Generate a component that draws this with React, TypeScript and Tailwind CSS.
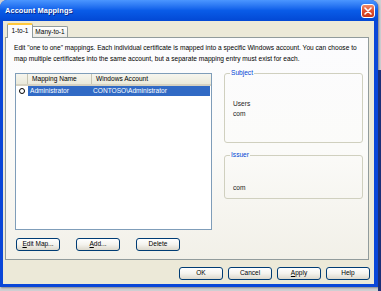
import React from "react";

const font = { fontFamily: '"Liberation Sans", Arial, sans-serif' };

function XpButton({ children, className = "" }: { children: React.ReactNode; className?: string }) {
  return (
    <div
      className={
        "h-[13px] w-[44px] flex items-center justify-center rounded-[3px] border border-[#003C74] bg-gradient-to-b from-[#ffffff] via-[#f4f3ee] to-[#dcd8cc] text-[6.5px] leading-none text-black " +
        className
      }
    >
      {children}
    </div>
  );
}

export default function App() {
  return (
    <div className="w-[381px] h-[291px] bg-[#cfcfd2] overflow-hidden flex" style={font}>
      <div className="w-[378px] h-[287px] flex flex-col rounded-t-[7px] bg-[#0a46d8] shadow-[1px_1px_2px_rgba(0,0,0,0.35)]">
        {/* Title bar */}
        <div className="h-[21px] flex items-center pl-[5px] pr-[3px] rounded-t-[7px] bg-gradient-to-b from-[#4b96ff] via-[#0a5ce8] to-[#0348d4]">
          <span className="text-white font-bold text-[7.4px] leading-none tracking-[0.1px] [text-shadow:1px_1px_0_#0a2a8a]">
            Account Mappings
          </span>
          <div className="flex-1" />
          <div className="w-[14px] h-[14px] rounded-[3px] border border-white bg-gradient-to-b from-[#f08a6a] via-[#e0502e] to-[#c8391c] flex items-center justify-center">
            <svg width="8" height="8" viewBox="0 0 8 8">
              <path d="M1 1 L7 7 M7 1 L1 7" stroke="white" strokeWidth="1.6" strokeLinecap="round" />
            </svg>
          </div>
        </div>

        {/* Body */}
        <div className="flex-1 ml-[3px] mr-[4px] mb-[3px] bg-[#ECE9D8] flex flex-col">
          {/* Tabs */}
          <div className="flex items-end pt-[2px] pl-[4px] h-[16px]">
            <div className="relative z-10 w-[26px] h-[15px] -mb-[1px] bg-[#fcfcfe] border-x border-[#919B9C] border-t-[2px] border-t-[#FFC83C] rounded-t-[2px] flex items-center justify-center text-[6.5px] leading-none text-black">
              1-to-1
            </div>
            <div className="w-[35px] h-[11px] bg-gradient-to-b from-[#ffffff] to-[#ecebe6] border-t border-r border-[#919B9C] rounded-tr-[2px] flex items-center justify-center text-[6.5px] leading-none text-black">
              Many-to-1
            </div>
          </div>

          {/* Panel */}
          <div className="ml-[2px] w-[364px] h-[223px] border border-[#919B9C] bg-gradient-to-b from-[#fcfcfe] via-[#fbfbf9] to-[#f2f0e8] flex flex-col">
            <div className="pt-[4px] pl-[8px] text-[6.6px] leading-[11px] text-black">
              <div className="whitespace-nowrap">
                Edit "one to one" mappings. Each individual certificate is mapped into a specific Windows account. You can choose to
              </div>
              <div className="whitespace-nowrap">
                map multiple certificates into the same account, but a separate mapping entry must exist for each.
              </div>
            </div>

            <div className="flex mt-[9px] pl-[9px]">
              {/* List */}
              <div className="w-[197px] h-[157px] border border-[#7F9DB9] bg-white flex flex-col">
                <div className="h-[12px] flex border-b-[2px] border-[#d6d2c2] bg-gradient-to-b from-[#f6f5ee] to-[#ebeadb] text-[6.6px] leading-none text-black">
                  <div className="w-[12px] border-r border-[#c7c5b2]" />
                  <div className="w-[64px] border-r border-[#c7c5b2] flex items-center pl-[4px]">Mapping Name</div>
                  <div className="flex-1 flex items-center pl-[4px]">Windows Account</div>
                </div>
                <div className="h-[10px] flex items-center text-[6.6px] leading-none">
                  <div className="w-[12px] flex items-center justify-center">
                    <div className="w-[6px] h-[6px] rounded-full border-[1.5px] border-black bg-white" />
                  </div>
                  <div className="w-[182px] h-[10px] bg-[#316AC5] text-white flex items-center">
                    <div className="w-[65px] pl-[2px]">Administrator</div>
                    <div>CONTOSO\Administrator</div>
                  </div>
                </div>
              </div>

              {/* Right column */}
              <div className="ml-[12px] w-[139px] -mt-[4px] flex flex-col">
                <fieldset className="h-[74px] border border-[#d0d0bf] rounded-[3px]">
                  <legend className="ml-[5px] px-[1px] text-[6.6px] leading-[8px] text-[#0046D5]">Subject</legend>
                  <div className="pl-[8px] pt-[22px] text-[6.6px] leading-[10px] text-[#222]">
                    <div>Users</div>
                    <div>com</div>
                  </div>
                </fieldset>
                <fieldset className="mt-[8px] h-[48px] border border-[#d0d0bf] rounded-[3px]">
                  <legend className="ml-[5px] px-[1px] text-[6.6px] leading-[8px] text-[#0046D5]">Issuer</legend>
                  <div className="pl-[8px] pt-[24px] text-[6.6px] leading-[10px] text-[#222]">
                    <div>com</div>
                  </div>
                </fieldset>
              </div>
            </div>

            {/* Panel buttons */}
            <div className="flex mt-[8px] pl-[10px] gap-[16px]">
              <XpButton>
                <span><span className="underline">E</span>dit Map...</span>
              </XpButton>
              <XpButton>
                <span><span className="underline">A</span>dd...</span>
              </XpButton>
              <XpButton>Delete</XpButton>
            </div>
          </div>

          {/* Dialog buttons */}
          <div className="flex justify-end mt-[7px] pr-[4px] gap-[5px]">
            <XpButton>OK</XpButton>
            <XpButton>Cancel</XpButton>
            <XpButton>
              <span><span className="underline">A</span>pply</span>
            </XpButton>
            <XpButton>Help</XpButton>
          </div>
        </div>
      </div>
      <div className="w-[3px] mt-[70px] h-[221px] bg-[#1b2f78]" />
    </div>
  );
}
